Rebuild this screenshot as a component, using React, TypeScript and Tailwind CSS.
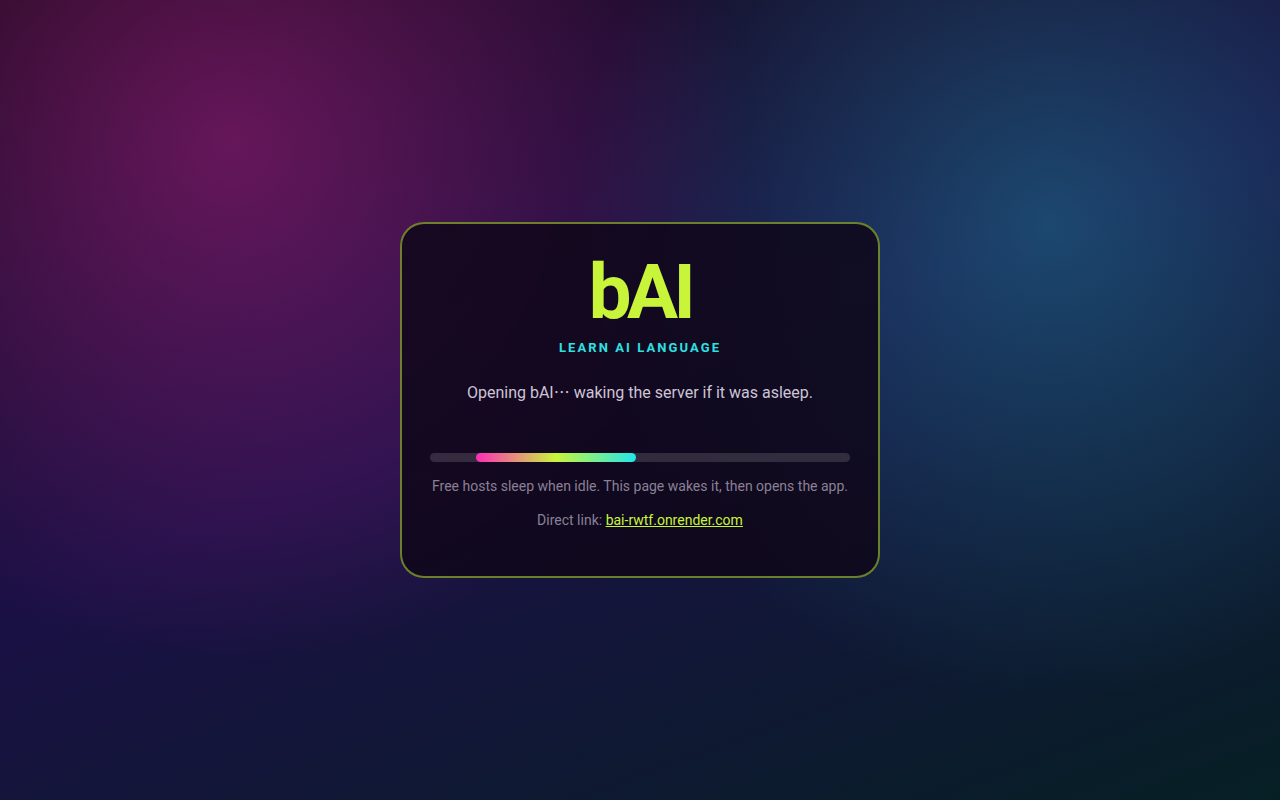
import { useId } from "react";

const APP_HOST = "bai-rwtf.onrender.com";

interface WakeBarProps {
  labelledBy: string;
}

function WakeBar({ labelledBy }: WakeBarProps) {
  return (
    <div
      role="progressbar"
      aria-labelledby={labelledBy}
      className="mt-12 h-[9px] w-full overflow-hidden rounded-full bg-white/14"
    >
      <div className="ml-[11%] h-full w-[38%] rounded-full bg-[linear-gradient(90deg,#ff2db8,#c8f53a,#22e6ea)]" />
    </div>
  );
}

export default function App() {
  const statusId = useId();

  return (
    <main className="flex min-h-screen items-center justify-center bg-[radial-gradient(circle_at_18%_18%,rgba(255,45,184,0.34),transparent_42%),radial-gradient(circle_at_82%_28%,rgba(34,230,234,0.26),transparent_40%),linear-gradient(160deg,#14081a_0%,#1a1045_48%,#061f24_100%)] p-6 font-[Roboto,'Liberation_Sans',Arial,sans-serif]">
      <section className="w-full max-w-[480px] rounded-3xl border-2 border-[#c8f53a]/50 bg-[#0f0719]/85 px-7 pt-[30px] pb-[46px] text-center">
        <h1 className="text-[76px] leading-[76px] font-bold tracking-[-0.06em] text-[#c8f53a]">
          bAI
        </h1>
        <p className="mt-2 text-[13px] leading-5 font-bold tracking-[0.16em] text-[#2fe0e0] uppercase">
          Learn AI language
        </p>
        <p id={statusId} className="mt-[21px] text-base leading-6 text-[#cdc4d8]">
          Opening bAI<span lang="ja" className="font-['Noto_Sans_CJK_JP',sans-serif]">…</span> waking the server if it was asleep.
        </p>

        <WakeBar labelledBy={statusId} />

        <p className="mt-[14px] text-sm leading-5 text-[#8a8096]">
          Free hosts sleep when idle. This page wakes it, then opens the app.
        </p>
        <p className="mt-[14px] text-sm leading-5 text-[#8a8096]">
          Direct link:{" "}
          <a href={`https://${APP_HOST}`} className="text-[#c8f53a] underline">
            {APP_HOST}
          </a>
        </p>
      </section>
    </main>
  );
}
